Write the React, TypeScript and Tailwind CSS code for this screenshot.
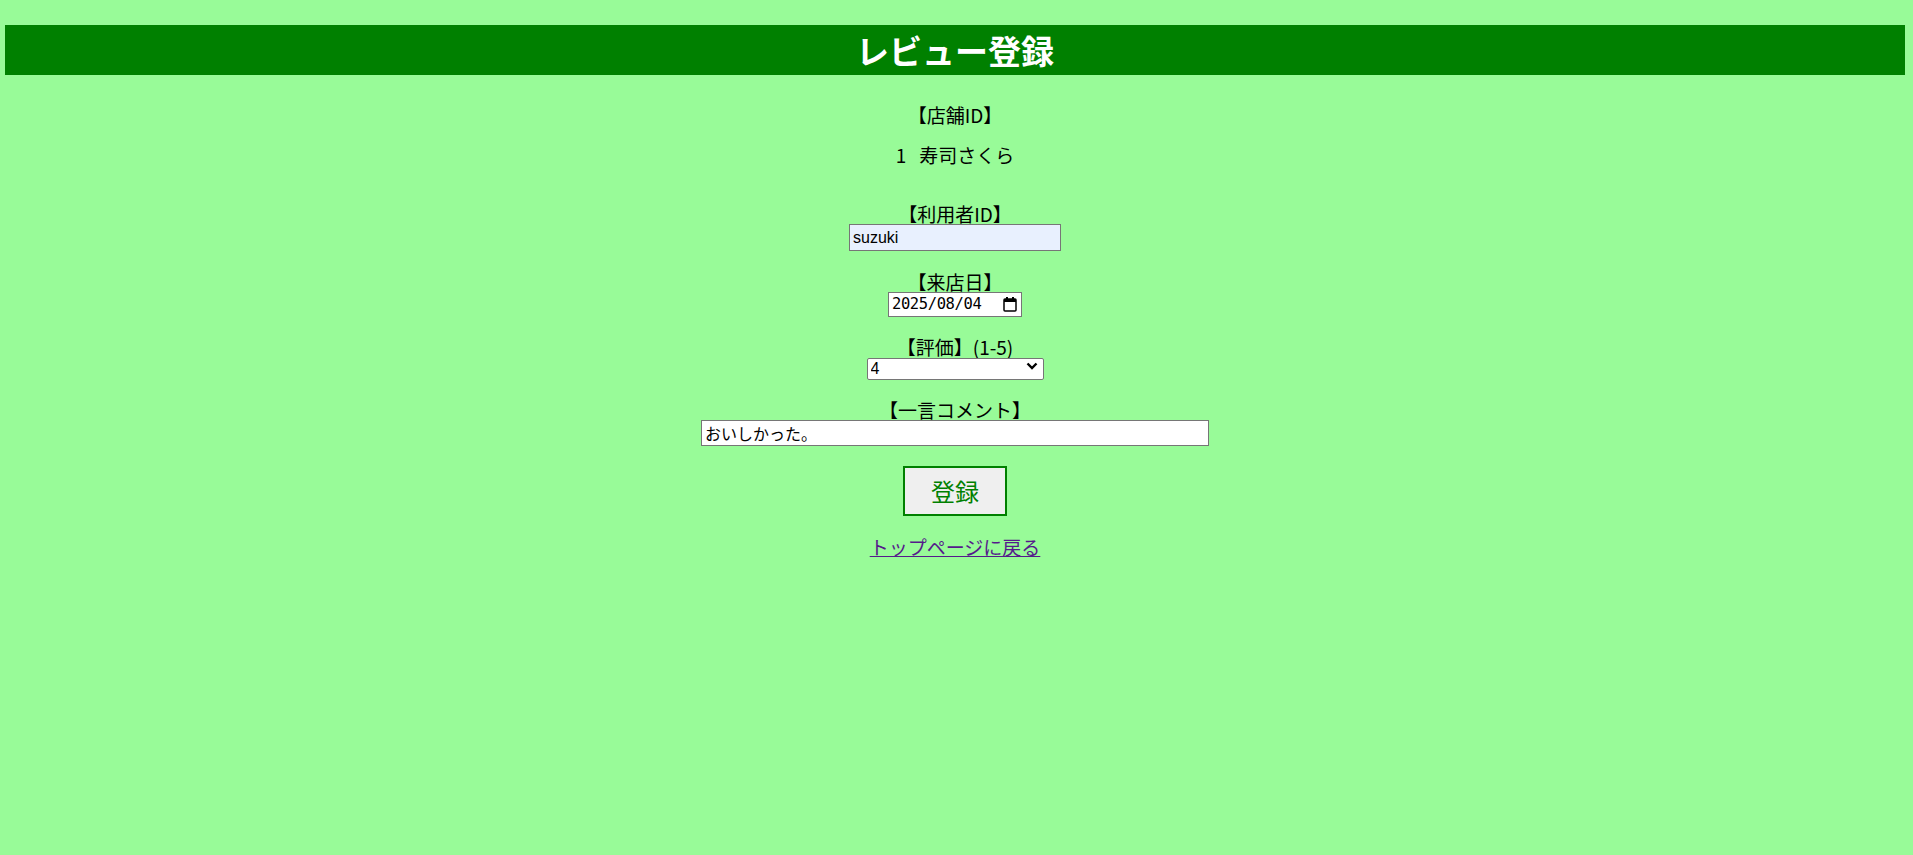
import React, { useState } from 'react';

const jp = "font-['Noto_Sans_CJK_JP','Noto_Sans',sans-serif]";

export default function App() {
  const [userId, setUserId] = useState('suzuki');
  const [date, setDate] = useState('2025/08/04');
  const [rating, setRating] = useState('4');
  const [comment, setComment] = useState('おいしかった。');

  return (
    <div className={`min-h-screen bg-[#98fb98] pl-[5px] pr-[8px] pt-[25px] text-black ${jp}`}>
      {/* header */}
      <div className="flex h-[50px] items-center justify-center bg-[#008000]">
        <h1 className="text-[33px] font-bold leading-none text-white">レビュー登録</h1>
      </div>

      <form className="flex flex-col items-center text-center" onSubmit={(e) => e.preventDefault()}>
        <div className="mt-[30px] text-[19px] leading-[20px]">【店舗ID】</div>
        <div className="mt-[20px] text-[19px] leading-[20px]">1&nbsp;&nbsp;&nbsp;寿司さくら</div>

        <label className="mt-[39px] text-[19px] leading-[20px]">【利用者ID】</label>
        <input
          className="h-[27px] w-[212px] border border-[#767676] bg-[#e8f0fe] px-[3px] font-['Liberation_Sans',sans-serif] text-[16px] outline-none"
          value={userId}
          onChange={(e) => setUserId(e.target.value)}
        />

        <label className="mt-[21px] text-[19px] leading-[20px]">【来店日】</label>
        <div className="flex h-[25px] w-[134px] items-center border border-[#767676] bg-white pl-[3px] pr-[4px]">
          <input
            className="w-full min-w-0 bg-transparent font-['DejaVu_Sans_Mono',monospace] text-[15.5px] tracking-[-0.4px] outline-none"
            value={date}
            onChange={(e) => setDate(e.target.value)}
          />
          <svg width="14" height="15" viewBox="0 0 14 15" className="shrink-0">
            <rect x="3" y="0" width="2" height="3" fill="#000" />
            <rect x="9" y="0" width="2" height="3" fill="#000" />
            <rect x="1" y="2" width="12" height="12" rx="1" fill="none" stroke="#000" strokeWidth="1.5" />
            <rect x="1" y="2" width="12" height="3" fill="#000" />
          </svg>
        </div>

        <label className="mt-[20px] h-[20px] text-[19px] leading-[20px]">【評価】(1-5)</label>
        <div className="relative -mt-[2px] h-[22px] w-[177px]">
          <select
            className="h-full w-full appearance-none rounded-[2px] border border-[#767676] bg-white pl-[3px] font-['Liberation_Sans',sans-serif] text-[16px] leading-none outline-none"
            value={rating}
            onChange={(e) => setRating(e.target.value)}
          >
            {['1', '2', '3', '4', '5'].map((v) => (
              <option key={v} value={v}>
                {v}
              </option>
            ))}
          </select>
          <svg
            width="12"
            height="8"
            viewBox="0 0 12 8"
            className="pointer-events-none absolute right-[6px] top-[7px]"
          >
            <path d="M1.5 1.5 L6 6 L10.5 1.5" fill="none" stroke="#000" strokeWidth="2.4" />
          </svg>
        </div>

        <label className="mt-[23px] h-[20px] text-[19px] leading-[20px]">【一言コメント】</label>
        <input
          className="h-[26px] w-[508px] border border-[#767676] bg-white px-[3px] font-['Liberation_Sans','Noto_Sans_CJK_JP',sans-serif] text-[16px] outline-none"
          value={comment}
          onChange={(e) => setComment(e.target.value)}
        />

        <button
          type="submit"
          className="mt-[20px] h-[50px] w-[104px] border-2 border-[#008000] bg-[#efefef] text-[24px] leading-none text-[#008000]"
        >
          登録
        </button>

        <a href="#" className="mt-[21px] text-[19px] leading-[20px] text-[#551a8b] underline">
          トップページに戻る
        </a>
      </form>
    </div>
  );
}
